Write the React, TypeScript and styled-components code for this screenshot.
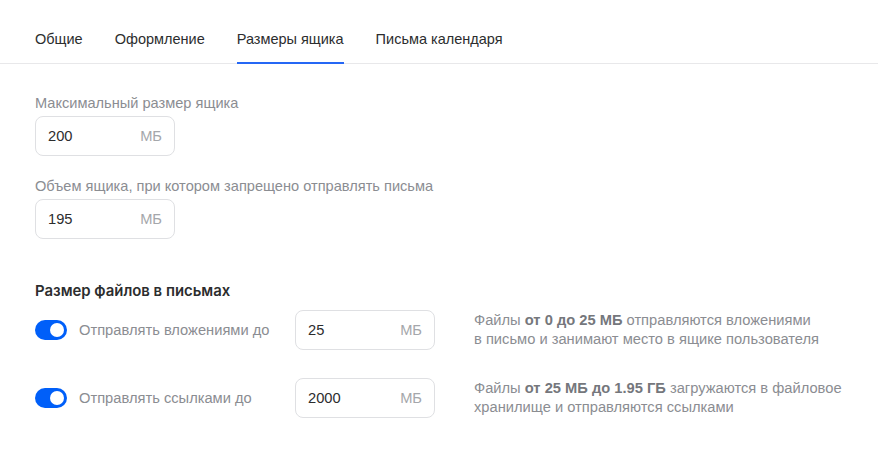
import React from "react";
import styled, { createGlobalStyle } from "styled-components";

const Global = createGlobalStyle`
  html, body { margin: 0; padding: 0; background: #fff; }
  body { font-family: "Liberation Sans", Arial, sans-serif; color: #2c2d2e; }
  * { box-sizing: border-box; }
`;

const Page = styled.div`
  width: 878px;
  height: 457px;
  background: #fff;
  display: flex;
  flex-direction: column;
  overflow: hidden;
`;

const TabBar = styled.div`
  display: flex;
  flex-shrink: 0;
  gap: 32px;
  padding: 0 35px;
  height: 64px;
  border-bottom: 1px solid #e8e8ea;
`;

const Tab = styled.div<{ $active?: boolean }>`
  font-size: 14.5px;
  color: #2c2d2e;
  display: flex;
  align-items: center;
  padding-top: 15px;
  border-bottom: 2px solid ${(p) => (p.$active ? "#2567f5" : "transparent")};
  margin-bottom: -1px;
`;

const Content = styled.div`
  padding: 30px 35px 0;
  display: flex;
  flex-direction: column;
`;

const Field = styled.div`
  display: flex;
  flex-direction: column;
  gap: 4px;
  margin-bottom: 21px;
`;

const FieldLabel = styled.div`
  font-size: 14.6px;
  line-height: 18px;
  color: #8b8d92;
`;

const InputBox = styled.div`
  width: 140px;
  height: 40px;
  border: 1px solid #dfe0e3;
  border-radius: 8px;
  display: flex;
  align-items: center;
  justify-content: space-between;
  padding: 0 12px;
  font-size: 14.7px;
`;

const Value = styled.span`
  color: #2c2d2e;
`;

const Unit = styled.span`
  color: #a5a7ab;
`;

const SectionTitle = styled.div`
  font-family: Inter, "Noto Sans", sans-serif;
  font-weight: 600;
  font-size: 14.9px;
  line-height: 18px;
  color: #2c2d2e;
  margin-top: 22px;
  margin-bottom: 10px;
`;

const Row = styled.div`
  display: grid;
  grid-template-columns: 260px 179px 1fr;
  align-items: center;
  margin-bottom: 28px;
`;

const ToggleLabel = styled.div`
  display: flex;
  align-items: center;
  gap: 12px;
  font-size: 14.7px;
  color: #8b8d92;
`;

const Toggle = styled.div`
  width: 32px;
  height: 20px;
  border-radius: 10px;
  background: #005ff9;
  position: relative;
  flex-shrink: 0;
  &::after {
    content: "";
    position: absolute;
    right: 3px;
    top: 3px;
    width: 14px;
    height: 14px;
    border-radius: 50%;
    background: #fff;
  }
`;

const Hint = styled.div`
  font-size: 14.7px;
  line-height: 19px;
  color: #8b8d92;
  b { font-weight: 700; color: #75777c; }
`;

export default function App() {
  return (
    <Page>
      <Global />
      <TabBar>
        <Tab>Общие</Tab>
        <Tab>Оформление</Tab>
        <Tab $active>Размеры ящика</Tab>
        <Tab>Письма календаря</Tab>
      </TabBar>
      <Content>
        <Field>
          <FieldLabel>Максимальный размер ящика</FieldLabel>
          <InputBox>
            <Value>200</Value>
            <Unit>МБ</Unit>
          </InputBox>
        </Field>
        <Field>
          <FieldLabel>Объем ящика, при котором запрещено отправлять письма</FieldLabel>
          <InputBox>
            <Value>195</Value>
            <Unit>МБ</Unit>
          </InputBox>
        </Field>
        <SectionTitle>Размер файлов в письмах</SectionTitle>
        <Row>
          <ToggleLabel>
            <Toggle />
            Отправлять вложениями до
          </ToggleLabel>
          <InputBox>
            <Value>25</Value>
            <Unit>МБ</Unit>
          </InputBox>
          <Hint>
            Файлы <b>от 0 до 25 МБ</b> отправляются вложениями
            <br />в письмо и занимают место в ящике пользователя
          </Hint>
        </Row>
        <Row>
          <ToggleLabel>
            <Toggle />
            Отправлять ссылками до
          </ToggleLabel>
          <InputBox>
            <Value>2000</Value>
            <Unit>МБ</Unit>
          </InputBox>
          <Hint>
            Файлы <b>от 25 МБ до 1.95 ГБ</b> загружаются в файловое
            <br />хранилище и отправляются ссылками
          </Hint>
        </Row>
      </Content>
    </Page>
  );
}
